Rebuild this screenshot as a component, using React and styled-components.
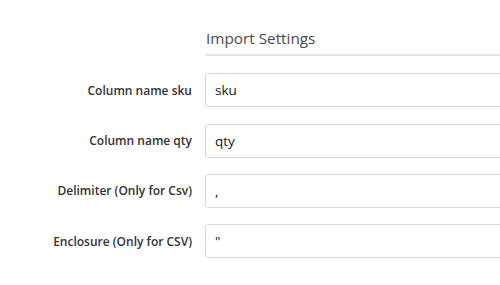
import React from 'react'
import styled, { createGlobalStyle } from 'styled-components'

const GlobalStyle = createGlobalStyle`
  body {
    margin: 0;
    background: #ffffff;
    font-family: "Open Sans", "Liberation Sans", sans-serif;
  }
`

const fields = [
  { label: 'Column name sku', value: 'sku' },
  { label: 'Column name qty', value: 'qty' },
  { label: 'Delimiter (Only for Csv)', value: ',' },
  { label: 'Enclosure (Only for CSV)', value: '"' },
]

function App() {
  return (
    <>
      <GlobalStyle />
      <Page>
        <Form>
          <Spacer />
          <Heading>Import Settings</Heading>
          {fields.map((f) => (
            <Row key={f.label}>
              <Label>{f.label}</Label>
              <Input defaultValue={f.value} />
            </Row>
          ))}
        </Form>
      </Page>
    </>
  )
}

export default App

const Page = styled.div`
  width: 500px;
  height: 285px;
  overflow: hidden;
  padding-top: 27px;
  box-sizing: border-box;
`

const Form = styled.div`
  display: grid;
  grid-template-columns: 192px 320px;
  column-gap: 13px;
  row-gap: 16.3px;
`

const Spacer = styled.div``

const Heading = styled.h3`
  margin: 0 0 1px;
  font-size: 15.3px;
  font-weight: 400;
  line-height: 22px;
  color: #4a4a4a;
  padding-left: 1px;
  padding-bottom: 5px;
  border-bottom: 2px solid #e6e6e6;
`

const Row = styled.div`
  display: contents;
`

const Label = styled.label`
  justify-self: end;
  align-self: center;
  font-size: 12px;
  font-weight: 600;
  color: #333;
`

const Input = styled.input`
  height: 34px;
  box-sizing: border-box;
  border: 1px solid #d9d9d9;
  border-radius: 3px;
  padding: 0 9px;
  font-family: "Open Sans", "Liberation Sans", sans-serif;
  font-size: 13.5px;
  font-weight: 500;
  color: #1a1a1a;
  outline: none;
`
